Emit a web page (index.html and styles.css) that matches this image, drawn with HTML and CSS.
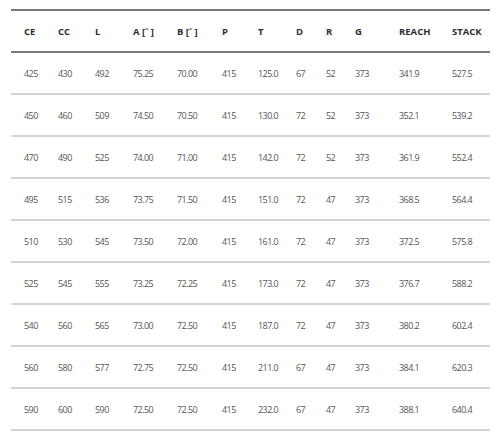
FILE: index.html
```html
<!DOCTYPE html>
<html>
<head>
<meta charset="utf-8">
<link rel="stylesheet" href="styles.css">
</head>
<body>
<table class="geo">
<colgroup>
<col class="w46"><col class="w37"><col class="w38"><col class="w44"><col class="w45"><col class="w36"><col class="w38"><col class="w30"><col class="w29"><col class="w44"><col class="w53"><col class="w38">
</colgroup>
<thead>
<tr><th>CE</th><th>CC</th><th>L</th><th>A [˚ ]</th><th>B [˚ ]</th><th>P</th><th>T</th><th>D</th><th>R</th><th>G</th><th>REACH</th><th>STACK</th></tr>
</thead>
<tbody>
<tr><td>425</td><td>430</td><td>492</td><td>75.25</td><td>70.00</td><td>415</td><td>125.0</td><td>67</td><td>52</td><td>373</td><td>341.9</td><td>527.5</td></tr>
<tr><td>450</td><td>460</td><td>509</td><td>74.50</td><td>70.50</td><td>415</td><td>130.0</td><td>72</td><td>52</td><td>373</td><td>352.1</td><td>539.2</td></tr>
<tr><td>470</td><td>490</td><td>525</td><td>74.00</td><td>71.00</td><td>415</td><td>142.0</td><td>72</td><td>52</td><td>373</td><td>361.9</td><td>552.4</td></tr>
<tr><td>495</td><td>515</td><td>536</td><td>73.75</td><td>71.50</td><td>415</td><td>151.0</td><td>72</td><td>47</td><td>373</td><td>368.5</td><td>564.4</td></tr>
<tr><td>510</td><td>530</td><td>545</td><td>73.50</td><td>72.00</td><td>415</td><td>161.0</td><td>72</td><td>47</td><td>373</td><td>372.5</td><td>575.8</td></tr>
<tr><td>525</td><td>545</td><td>555</td><td>73.25</td><td>72.25</td><td>415</td><td>173.0</td><td>72</td><td>47</td><td>373</td><td>376.7</td><td>588.2</td></tr>
<tr><td>540</td><td>560</td><td>565</td><td>73.00</td><td>72.50</td><td>415</td><td>187.0</td><td>72</td><td>47</td><td>373</td><td>380.2</td><td>602.4</td></tr>
<tr><td>560</td><td>580</td><td>577</td><td>72.75</td><td>72.50</td><td>415</td><td>211.0</td><td>67</td><td>47</td><td>373</td><td>384.1</td><td>620.3</td></tr>
<tr><td>590</td><td>600</td><td>590</td><td>72.50</td><td>72.50</td><td>415</td><td>232.0</td><td>67</td><td>47</td><td>373</td><td>388.1</td><td>640.4</td></tr>
</tbody>
</table>
</body>
</html>
```
FILE: styles.css
```css
html, body {
  margin: 0;
  padding: 0;
  background: #ffffff;
}
body {
  padding: 9px 10px 0 11px;
  font-family: "Open Sans", "Liberation Sans", sans-serif;
}
.geo {
  border-collapse: collapse;
  table-layout: fixed;
  width: 479px;
  border-top: 2px solid #7a7a7a;
}
.w46 { width: 47px; }
.w37 { width: 37px; }
.w38 { width: 38px; }
.w44 { width: 44px; }
.w45 { width: 45px; }
.w36 { width: 36px; }
.w30 { width: 30px; }
.w29 { width: 29px; }
.w53 { width: 53px; }
.geo th, .geo td {
  padding: 0;
  text-align: left;
  white-space: nowrap;
}
.geo th:first-child, .geo td:first-child {
  padding-left: 13px;
}
.geo th {
  height: 40px;
  font-size: 9.5px;
  font-weight: 700;
  color: #2e2e2e;
  border-bottom: 2px solid #7a7a7a;
  letter-spacing: 0;
}
.geo td {
  height: 40px;
  font-size: 9px;
  color: #555555;
  letter-spacing: -0.55px;
  border-bottom: 2px solid #d4d4d4;
}
```
